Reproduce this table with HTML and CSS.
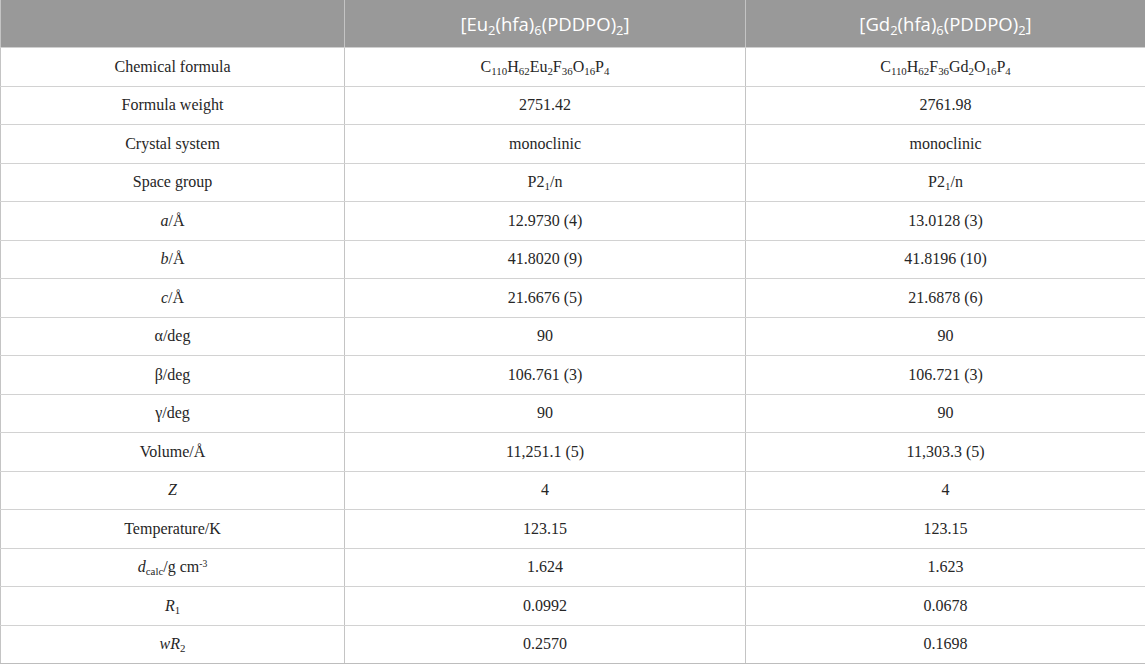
FILE: index.html
```html
<!DOCTYPE html>
<html>
<head>
<meta charset="utf-8">
<link rel="stylesheet" href="styles.css">
</head>
<body>
<table class="data">
  <colgroup>
    <col class="c1"><col class="c2"><col class="c3">
  </colgroup>
  <thead>
    <tr>
      <th></th>
      <th>[Eu<sub>2</sub>(hfa)<sub>6</sub>(PDDPO)<sub>2</sub>]</th>
      <th>[Gd<sub>2</sub>(hfa)<sub>6</sub>(PDDPO)<sub>2</sub>]</th>
    </tr>
  </thead>
  <tbody>
    <tr><td>Chemical formula</td><td>C<sub>110</sub>H<sub>62</sub>Eu<sub>2</sub>F<sub>36</sub>O<sub>16</sub>P<sub>4</sub></td><td>C<sub>110</sub>H<sub>62</sub>F<sub>36</sub>Gd<sub>2</sub>O<sub>16</sub>P<sub>4</sub></td></tr>
    <tr><td>Formula weight</td><td>2751.42</td><td>2761.98</td></tr>
    <tr><td>Crystal system</td><td>monoclinic</td><td>monoclinic</td></tr>
    <tr><td>Space group</td><td>P2<sub>1</sub>/n</td><td>P2<sub>1</sub>/n</td></tr>
    <tr><td><i>a</i>/Å</td><td>12.9730 (4)</td><td>13.0128 (3)</td></tr>
    <tr><td><i>b</i>/Å</td><td>41.8020 (9)</td><td>41.8196 (10)</td></tr>
    <tr><td><i>c</i>/Å</td><td>21.6676 (5)</td><td>21.6878 (6)</td></tr>
    <tr><td>α/deg</td><td>90</td><td>90</td></tr>
    <tr><td>β/deg</td><td>106.761 (3)</td><td>106.721 (3)</td></tr>
    <tr><td>γ/deg</td><td>90</td><td>90</td></tr>
    <tr><td>Volume/Å</td><td>11,251.1 (5)</td><td>11,303.3 (5)</td></tr>
    <tr><td><i>Z</i></td><td>4</td><td>4</td></tr>
    <tr><td>Temperature/K</td><td>123.15</td><td>123.15</td></tr>
    <tr><td><i>d</i><sub>calc</sub>/g cm<sup>-3</sup></td><td>1.624</td><td>1.623</td></tr>
    <tr><td><i>R</i><sub>1</sub></td><td>0.0992</td><td>0.0678</td></tr>
    <tr><td><i>wR</i><sub>2</sub></td><td>0.2570</td><td>0.1698</td></tr>
  </tbody>
</table>
</body>
</html>
```

FILE: styles.css
```css
html, body {
  margin: 0;
  padding: 0;
  background: #ffffff;
}

.data {
  width: 1145px;
  border-collapse: collapse;
  table-layout: fixed;
  font-family: "Liberation Serif", "Times New Roman", serif;
  font-size: 16px;
  color: #262626;
}

.c1 { width: 344px; }
.c2 { width: 401px; }
.c3 { width: 400px; }

.data th {
  height: 47px;
  background: #999999;
  color: #ffffff;
  font-family: "Open Sans", "Noto Sans", sans-serif;
  font-weight: 400;
  font-size: 18.5px;
  text-align: center;
  vertical-align: middle;
  padding: 0;
  border-left: 1px solid #c4c4c4;
  border-right: 1px solid #c4c4c4;
  border-bottom: 1px solid #d0d0d0;
}

.data td {
  height: 37.5px;
  text-align: center;
  vertical-align: middle;
  padding: 0;
  border: 1px solid #d2d2d2;
  border-left-color: #c4c4c4;
  border-right-color: #c4c4c4;
}

.data tbody tr:last-child td {
  border-bottom-color: #bdbdbd;
}

.data sub {
  font-size: 0.68em;
  vertical-align: -0.28em;
  line-height: 0;
}

.data th sub {
  font-size: 0.7em;
  vertical-align: -0.3em;
}

.data sup {
  font-size: 0.6em;
  vertical-align: 0.5em;
  line-height: 0;
}
```
